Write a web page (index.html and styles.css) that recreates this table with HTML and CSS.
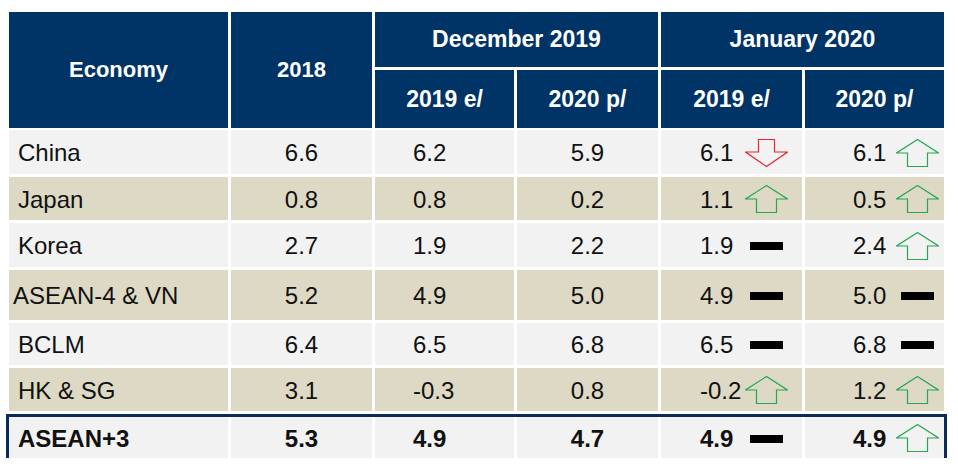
FILE: index.html
```html
<!DOCTYPE html>
<html lang="en">
<head>
<meta charset="utf-8">
<title>ASEAN+3 growth forecasts</title>
<link rel="stylesheet" href="styles.css">
</head>
<body>
<svg class="defs" width="0" height="0" aria-hidden="true">
  <symbol id="up" viewBox="0 0 43 29">
    <polygon points="21.5,0.5 42.5,14 31.5,14 31.5,27.5 11.5,27.5 11.5,14 0.5,14" fill="none" stroke="#26a553" stroke-width="1.2"/>
  </symbol>
  <symbol id="down" viewBox="0 0 43 29">
    <polygon points="13.5,0.5 29.5,0.5 29.5,13 42.5,13 21.5,27.5 0.5,13 13.5,13" fill="none" stroke="#e5262c" stroke-width="1.2"/>
  </symbol>
</svg>
<div class="table">
  <div class="head">
    <div class="h h-eco">Economy</div>
    <div class="h h-year">2018</div>
    <div class="h h-dec">December 2019</div>
    <div class="h h-jan">January 2020</div>
    <div class="h">2019 e/</div>
    <div class="h">2020 p/</div>
    <div class="h">2019 e/</div>
    <div class="h">2020 p/</div>
  </div>

  <div class="row light r44">
    <div class="c name">China</div>
    <div class="c mid">6.6</div>
    <div class="c left">6.2</div>
    <div class="c mid">5.9</div>
    <div class="c j1"><span class="num">6.1</span><svg class="ic"><use href="#down"/></svg></div>
    <div class="c j2"><span class="num">6.1</span><svg class="ic"><use href="#up"/></svg></div>
  </div>
  <div class="row tan r43">
    <div class="c name">Japan</div>
    <div class="c mid">0.8</div>
    <div class="c left">0.8</div>
    <div class="c mid">0.2</div>
    <div class="c j1"><span class="num">1.1</span><svg class="ic"><use href="#up"/></svg></div>
    <div class="c j2"><span class="num">0.5</span><svg class="ic"><use href="#up"/></svg></div>
  </div>
  <div class="row light r44">
    <div class="c name">Korea</div>
    <div class="c mid">2.7</div>
    <div class="c left">1.9</div>
    <div class="c mid">2.2</div>
    <div class="c j1"><span class="num">1.9</span><span class="ic"><span class="dash"></span></span></div>
    <div class="c j2"><span class="num">2.4</span><svg class="ic"><use href="#up"/></svg></div>
  </div>
  <div class="row tan r50">
    <div class="c name small">ASEAN-4 &amp; VN</div>
    <div class="c mid">5.2</div>
    <div class="c left">4.9</div>
    <div class="c mid">5.0</div>
    <div class="c j1"><span class="num">4.9</span><span class="ic"><span class="dash"></span></span></div>
    <div class="c j2"><span class="num">5.0</span><span class="ic"><span class="dash"></span></span></div>
  </div>
  <div class="row light r42">
    <div class="c name">BCLM</div>
    <div class="c mid">6.4</div>
    <div class="c left">6.5</div>
    <div class="c mid">6.8</div>
    <div class="c j1"><span class="num">6.5</span><span class="ic"><span class="dash"></span></span></div>
    <div class="c j2"><span class="num">6.8</span><span class="ic"><span class="dash"></span></span></div>
  </div>
  <div class="row tan r43">
    <div class="c name">HK &amp; SG</div>
    <div class="c mid">3.1</div>
    <div class="c left">-0.3</div>
    <div class="c mid">0.8</div>
    <div class="c j1"><span class="num">-0.2</span><svg class="ic"><use href="#up"/></svg></div>
    <div class="c j2"><span class="num">1.2</span><svg class="ic"><use href="#up"/></svg></div>
  </div>
  <div class="row light total">
    <div class="c name">ASEAN+3</div>
    <div class="c mid">5.3</div>
    <div class="c left">4.9</div>
    <div class="c mid">4.7</div>
    <div class="c j1"><span class="num">4.9</span><span class="ic"><span class="dash"></span></span></div>
    <div class="c j2"><span class="num">4.9</span><svg class="ic"><use href="#up"/></svg></div>
  </div>
</div>
</body>
</html>
```

FILE: styles.css
```css
html, body {
  margin: 0;
  background: #ffffff;
}
body {
  padding: 12px 0 0 9px;
  font-family: "Liberation Sans", Arial, sans-serif;
  color: #111111;
}
.defs {
  position: absolute;
  width: 0;
  height: 0;
  overflow: hidden;
}
.table {
  display: flex;
  flex-direction: column;
  gap: 3px;
  width: 935px;
}
.head,
.row {
  display: grid;
  grid-template-columns: 219px 141px 139px 141px 141px 139px;
  column-gap: 3px;
}
.head {
  grid-template-rows: 55px 58px;
  row-gap: 3px;
  margin-bottom: -1px;
}
.h {
  background: #003366;
  color: #ffffff;
  font-weight: bold;
  font-size: 23px;
  display: flex;
  align-items: center;
  justify-content: center;
}
.h-eco { grid-row: 1 / 3; grid-column: 1; font-size: 22px; }
.h-year { grid-row: 1 / 3; grid-column: 2; font-size: 22px; }
.h-dec { grid-row: 1; grid-column: 3 / 5; }
.h-jan { grid-row: 1; grid-column: 5 / 7; }

.r42 { height: 42px; }
.r43 { height: 43px; }
.r44 { height: 44px; }
.r50 { height: 50px; }

.light .c { background: #f2f2f2; }
.tan .c { background: #ddd9c4; }

.c {
  display: flex;
  align-items: center;
  font-size: 24px;
  padding-top: 2px;
  box-sizing: border-box;
}
.name { padding-left: 9px; }
.name.small { padding-left: 4px; }
.mid { justify-content: center; }
.left { padding-left: 38px; }
.j1 { padding-left: 39px; }
.j2 { padding-left: 48px; }
.j1 .num { width: 45px; }
.j2 .num { width: 43px; }
.ic {
  width: 43px;
  height: 29px;
  display: flex;
  align-items: center;
  justify-content: center;
  flex: none;
}
.dash {
  width: 33px;
  height: 8px;
  background: #000000;
}

.total {
  height: 41px;
  margin-top: 3px;
  outline: 3px solid #0b2a5c;
}
.total .c { font-weight: bold; }
```
